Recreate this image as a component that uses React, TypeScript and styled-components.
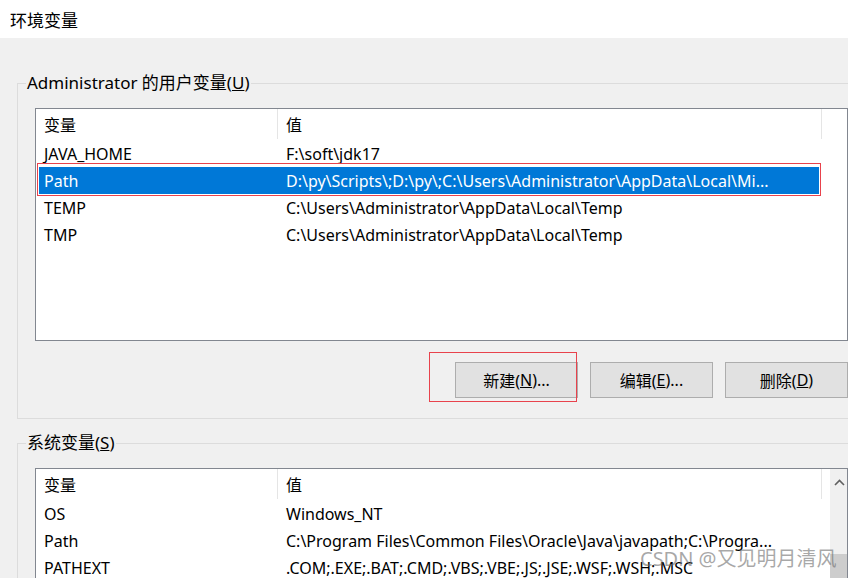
import styled, { createGlobalStyle } from "styled-components"

const GlobalStyle = createGlobalStyle`
  html, body {
    margin: 0;
    padding: 0;
    background: #f0f0f0;
    overflow: hidden;
  }
  body {
    font-family: "Noto Sans", "Noto Sans CJK SC", sans-serif;
    font-size: 16px;
    color: #000;
  }
`

const Window = styled.div`
  width: 848px;
  height: 578px;
  overflow: hidden;
  position: relative;
  background: #f0f0f0;
`

const TitleBar = styled.div`
  height: 38px;
  background: #fff;
  display: flex;
  align-items: center;
  padding-left: 10px;
  font-size: 17px;
`

const Body = styled.div`
  padding: 34px 0 0 17px;
  width: 849px;
  display: flex;
  flex-direction: column;
  gap: 13px;
`

const Group = styled.fieldset`
  margin: 0;
  padding: 14px 17px 20px 17px;
  border: 1px solid #dcdcdc;
  min-width: 0;
`

const Legend = styled.legend`
  padding: 0 1px;
  margin-left: -9px;
  font-size: 17px;
  line-height: 22px;
`

const List = styled.div<{ $height: number }>`
  background: #fff;
  border: 1px solid #828790;
  height: ${p => p.$height}px;
  display: flex;
  overflow: hidden;
  position: relative;
`

const Table = styled.div`
  flex: 1;
  display: flex;
  flex-direction: column;
`

const HeaderRow = styled.div`
  height: 30px;
  display: grid;
  grid-template-columns: 242px 544px 1fr;
  margin-bottom: 1px;
`

const HeaderCell = styled.div`
  display: flex;
  align-items: center;
  padding-left: 8px;
  border-right: 1px solid #e5e5e5;
  &:last-child { border-right: none; }
`

const Row = styled.div<{ $selected?: boolean }>`
  height: 27px;
  display: grid;
  grid-template-columns: 242px 538px;
  width: 780px;
  margin-left: 3px;
  background: ${p => (p.$selected ? "#0078d7" : "transparent")};
  color: ${p => (p.$selected ? "#fff" : "#000")};
  position: relative;
`

const Cell = styled.div`
  display: flex;
  align-items: center;
  padding-left: 5px;
  white-space: nowrap;
  overflow: hidden;
`

const Highlight = styled.div`
  position: absolute;
  left: -2px;
  right: -2px;
  top: -4px;
  bottom: -2px;
  border: 1px solid #e8424c;
  pointer-events: none;
`

const ButtonRow = styled.div`
  display: flex;
  justify-content: flex-end;
  gap: 12px;
  margin-top: 21px;
`

const Button = styled.div`
  width: 121px;
  height: 34px;
  background: #e1e1e1;
  border: 1px solid #adadad;
  display: flex;
  align-items: center;
  justify-content: center;
  position: relative;
  font-size: 16px;
`

const ButtonMark = styled.div`
  position: absolute;
  left: -27px;
  top: -11px;
  width: 146px;
  height: 48px;
  border: 1px solid #e8424c;
  pointer-events: none;
`

const Scrollbar = styled.div`
  width: 23px;
  background: #f0f0f0;
  display: flex;
  flex-direction: column;
  align-items: center;
`

const ScrollArrow = styled.div`
  height: 26px;
  display: flex;
  align-items: center;
  justify-content: center;
`

const Thumb = styled.div`
  width: 19px;
  margin-top: 59px;
  flex: 1;
  background: #cdcdcd;
`

const Watermark = styled.div`
  position: absolute;
  left: 640px;
  top: 543px;
  font-size: 20px;
  color: rgba(110, 110, 110, 0.6);
  white-space: nowrap;
  pointer-events: none;
`

type Variable = { name: string; value: string; selected?: boolean }

const userVars: Variable[] = [
  { name: "JAVA_HOME", value: "F:\\soft\\jdk17" },
  { name: "Path", value: "D:\\py\\Scripts\\;D:\\py\\;C:\\Users\\Administrator\\AppData\\Local\\Mi...", selected: true },
  { name: "TEMP", value: "C:\\Users\\Administrator\\AppData\\Local\\Temp" },
  { name: "TMP", value: "C:\\Users\\Administrator\\AppData\\Local\\Temp" },
]

const systemVars: Variable[] = [
  { name: "OS", value: "Windows_NT" },
  { name: "Path", value: "C:\\Program Files\\Common Files\\Oracle\\Java\\javapath;C:\\Progra..." },
  { name: "PATHEXT", value: ".COM;.EXE;.BAT;.CMD;.VBS;.VBE;.JS;.JSE;.WSF;.WSH;.MSC" },
]

const VarTable = ({ rows }: { rows: Variable[] }) => (
  <Table>
    <HeaderRow>
      <HeaderCell>变量</HeaderCell>
      <HeaderCell>值</HeaderCell>
      <HeaderCell />
    </HeaderRow>
    {rows.map(r => (
      <Row key={r.name} $selected={r.selected}>
        <Cell>{r.name}</Cell>
        <Cell>{r.value}</Cell>
        {r.selected && <Highlight />}
      </Row>
    ))}
  </Table>
)

export default function App() {
  return (
    <Window>
      <GlobalStyle />
      <TitleBar>环境变量</TitleBar>
      <Body>
        <Group>
          <Legend>Administrator 的用户变量(<u>U</u>)</Legend>
          <List $height={231}>
            <VarTable rows={userVars} />
          </List>
          <ButtonRow>
            <Button>
              新建(<u>N</u>)...
              <ButtonMark />
            </Button>
            <Button>编辑(<u>E</u>)...</Button>
            <Button>删除(<u>D</u>)</Button>
          </ButtonRow>
        </Group>
        <Group>
          <Legend>系统变量(<u>S</u>)</Legend>
          <List $height={200}>
            <VarTable rows={systemVars} />
            <Scrollbar>
              <ScrollArrow>
                <svg width="11" height="7" viewBox="0 0 11 7">
                  <path d="M1 6 L5.5 1.5 L10 6" fill="none" stroke="#606060" strokeWidth="1.6" />
                </svg>
              </ScrollArrow>
              <Thumb />
            </Scrollbar>
          </List>
        </Group>
      </Body>
      <Watermark>CSDN @又见明月清风</Watermark>
    </Window>
  )
}
